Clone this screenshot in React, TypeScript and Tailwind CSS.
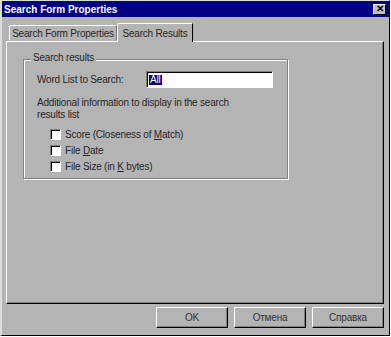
import React from "react";

const font = { fontFamily: '"Liberation Sans", Arial, sans-serif' };

function Check({ children }: { children: React.ReactNode }) {
  return (
    <div className="flex items-center h-[16px]">
      <span className="w-[11px] h-[11px] bg-white border border-t-[#808080] border-l-[#808080] border-b-white border-r-white shadow-[inset_1px_1px_0_#000]" />
      <span className="ml-[4px]">{children}</span>
    </div>
  );
}

function Btn({ label }: { label: string }) {
  return (
    <button className="w-[72px] h-[21px] border border-t-white border-l-white border-b-black border-r-black shadow-[inset_-1px_-1px_0_#808080] text-[10px] text-[#333]">
      {label}
    </button>
  );
}

export default function App() {
  return (
    <div style={font} className="w-[391px] h-[337px] bg-white">
      <div className="w-[390px] h-[336px] bg-[#b4b4b4] border-l-2 border-t border-l-[#dcdcdc] border-t-[#dcdcdc] border-r border-b border-r-black border-b-black flex flex-col text-[10px] text-[#262626] tracking-[-0.2px]">
        <div className="h-[16px] bg-[#000080] flex items-center justify-between pl-[2px] pr-[3px]">
          <span className="text-white font-bold text-[10px] tracking-normal">Search Form Properties</span>
          <span className="w-[13px] h-[11px] bg-[#c0c0c0] border border-t-white border-l-white border-b-black border-r-black flex items-center justify-center text-[10px] font-bold leading-none text-black">
            ✕
          </span>
        </div>

        <div className="flex items-end h-[18px] mt-[6px] pl-[5px] relative z-10">
          <div className="h-[15px] w-[108px] ml-[2px] whitespace-nowrap border-t border-l border-white border-r border-r-[#707070] rounded-tl-[2px] flex items-center justify-center mb-[1px]">
            Search Form Properties
          </div>
          <div className="h-[19px] w-[76px] -mb-[1px] whitespace-nowrap bg-[#b4b4b4] border-t border-l border-white border-r border-r-black rounded-tl-[2px] flex items-center justify-center">
            Search Results
          </div>
        </div>

        <div className="ml-[4px] w-[378px] h-[263px] border border-t-white border-l-white border-b-black border-r-black shadow-[inset_-1px_-1px_0_#808080] pl-[16px] pt-[17px]">
          <div className="relative w-[265px] h-[120px] border border-[#808080] shadow-[1px_1px_0_#fff,inset_1px_1px_0_#fff] pl-[13px] pt-[11px]">
            <span className="absolute -top-[7px] left-[7px] px-[2px] bg-[#b4b4b4] leading-none">Search results</span>
            <div className="flex items-center h-[17px]">
              <span className="w-[109px]">Word List to Search:</span>
              <div className="w-[127px] h-[17px] bg-white border border-t-[#808080] border-l-[#808080] border-b-white border-r-white shadow-[inset_1px_1px_0_#000] flex items-center pl-[2px]">
                <span className="bg-[#000080] text-white leading-none px-[1px]">All</span>
              </div>
            </div>
            <div className="mt-[9px] leading-[12px] w-[215px]">
              Additional information to display in the search results list
            </div>
            <div className="pl-[13px] mt-[5px]">
              <Check>
                Score (Closeness of <u>M</u>atch)
              </Check>
              <Check>
                File <u>D</u>ate
              </Check>
              <Check>
                File Size (in <u>K</u> bytes)
              </Check>
            </div>
          </div>
        </div>

        <div className="flex justify-end gap-[6px] pr-[5px] mt-[3px]">
          <Btn label="OK" />
          <Btn label="Отмена" />
          <Btn label="Справка" />
        </div>
      </div>
    </div>
  );
}
